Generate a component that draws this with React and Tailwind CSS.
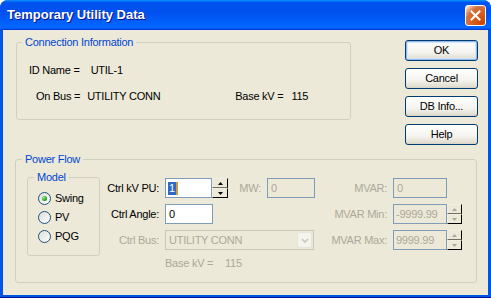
import React from "react";

function Arrow({ up, color }) {
  return (
    <svg width="5" height="3" viewBox="0 0 5 3">
      <polygon points={up ? "2.5,0 5,3 0,3" : "0,0 5,0 2.5,3"} fill={color} />
    </svg>
  );
}

function Spinner({ disabled, w }) {
  const c = disabled ? "#aca899" : "#000";
  return (
    <div className={`flex flex-col h-[20px] ${w}`}>
      <div className="flex-1 flex items-center justify-center bg-[#ece9d8] border border-[#f1efe2] border-r-black border-b-[#716f64]">
        <Arrow up color={c} />
      </div>
      <div className="flex-1 flex items-center justify-center bg-[#ece9d8] border border-[#f1efe2] border-r-black border-b-black">
        <Arrow color={c} />
      </div>
    </div>
  );
}

function Button({ children, def }) {
  return (
    <div
      className={`h-[21px] w-[73px] flex items-center justify-center rounded-[3px] border border-[#003c74] bg-[linear-gradient(180deg,#ffffff,#f4f3ee_60%,#e3e0d3_90%,#d6d0c5)] ${
        def ? "shadow-[inset_0_0_0_1px_#98b8ea,inset_0_0_0_2px_#cee7ff]" : ""
      }`}
    >
      {children}
    </div>
  );
}

function Radio({ checked, label }) {
  return (
    <div className="flex items-center h-[13px] gap-[4px]">
      <div className="w-[13px] h-[13px] rounded-full border border-[#1c5180] bg-[linear-gradient(135deg,#dcdcd7,#ffffff)] flex items-center justify-center">
        {checked && (
          <div className="w-[5px] h-[5px] rounded-full bg-[radial-gradient(circle_at_35%_35%,#a6e88a,#21a121_60%,#1a8a1a)]" />
        )}
      </div>
      <span>{label}</span>
    </div>
  );
}

export default function App() {
  return (
    <div className="w-[491px] h-[298px] flex flex-col rounded-t-[8px] overflow-hidden bg-[#0055e5] font-['Liberation_Sans',Arial,sans-serif] text-[11px] leading-[13px] tracking-[-0.25px] text-black">
      {/* title bar */}
      <div className="h-[30px] shrink-0 flex items-center justify-between pl-[7px] pr-[5px] bg-[linear-gradient(180deg,#0997ff,#0053ee_8%,#0050ee_40%,#0066ff_88%,#0066ff_93%,#005bff_95%,#003dd7_96%,#003dd7)]">
        <span className="text-white font-bold text-[13px] leading-[16px] tracking-normal [text-shadow:1px_1px_#0f1089]">
          Temporary Utility Data
        </span>
        <div className="w-[21px] h-[21px] rounded-[3px] border border-white bg-[radial-gradient(circle_at_90%_90%,#cc4600_0%,#dc6527_55%,#cd7546_70%,#ffccb2_90%,#ffffff_100%)] flex items-center justify-center">
          <svg width="11" height="11" viewBox="0 0 11 11">
            <path d="M1.5 1.5 L9.5 9.5 M9.5 1.5 L1.5 9.5" stroke="white" strokeWidth="2" strokeLinecap="square" />
          </svg>
        </div>
      </div>

      {/* frame body */}
      <div className="flex-1 flex flex-col px-[3px] pb-[2px] border-b border-[#00138c]">
        <div className="flex-1 bg-[#ece9d8] flex flex-col">
          {/* top section */}
          <div className="flex items-start h-[115px]">
            <fieldset className="ml-[13px] mt-[6px] w-[335px] h-[84px] border border-[#d0d0bf] rounded-[3px]">
              <legend className="ml-[5px] px-[3px] text-[#0046d5]">Connection Information</legend>
              <div className="flex mt-[15px] pl-[12px]">
                <span>ID Name =</span>
                <span className="ml-[11px]">UTIL-1</span>
              </div>
              <div className="flex mt-[13px]">
                <span className="ml-[19px]">On Bus =</span>
                <span className="ml-[7px] w-[148px]">UTILITY CONN</span>
                <span>Base kV =</span>
                <span className="ml-[8px]">115</span>
              </div>
            </fieldset>
            <div className="ml-[54px] mt-[10px] flex flex-col gap-[7px]">
              <Button def>OK</Button>
              <Button>Cancel</Button>
              <Button>DB Info...</Button>
              <Button>Help</Button>
            </div>
          </div>

          {/* power flow */}
          <fieldset className="ml-[12px] mt-[8px] w-[462px] h-[130px] border border-[#d0d0bf] rounded-[3px]">
            <legend className="ml-[6px] px-[3px] text-[#0046d5]">Power Flow</legend>
            <div className="flex items-start">
              <fieldset className="ml-[11px] mt-[5px] w-[73px] h-[85px] border border-[#d0d0bf] rounded-[3px]">
                <legend className="ml-[6px] px-[3px] text-[#0046d5]">Model</legend>
                <div className="flex flex-col gap-[6px] mt-[8px] ml-[10px]">
                  <Radio checked label="Swing" />
                  <Radio label="PV" />
                  <Radio label="PQG" />
                </div>
              </fieldset>

              <div className="mt-[12px] grid grid-cols-[65px_63px_39px_48px_78px_69px] grid-rows-[20px_20px_20px_14px] gap-y-[6px] items-center">
                {/* row 1 */}
                <span className="text-right pr-[6px]">Ctrl kV PU:</span>
                <div className="flex h-[20px]">
                  <div className="w-[47px] h-[20px] border border-[#7f9db9] bg-white flex items-center pl-[2px]">
                    <span className="bg-[#316ac5] text-white px-[1px] leading-[13px]">1</span>
                    <span className="w-[2px] h-[13px] bg-[#cf9a3a]" />
                  </div>
                  <Spinner w="w-[16px]" />
                </div>
                <span className="text-right pr-[6px] text-[#aca899]">MW:</span>
                <div className="w-[48px] h-[20px] border border-[#7f9db9] flex items-center pl-[3px] text-[#aca899]">0</div>
                <span className="text-right pr-[6px] text-[#aca899]">MVAR:</span>
                <div className="w-[54px] h-[20px] border border-[#7f9db9] flex items-center pl-[3px] text-[#aca899]">0</div>

                {/* row 2 */}
                <span className="text-right pr-[6px]">Ctrl Angle:</span>
                <div className="w-[48px] h-[20px] border border-[#7f9db9] bg-white flex items-center pl-[3px]">0</div>
                <span />
                <span />
                <span className="text-right pr-[6px] text-[#aca899]">MVAR Min:</span>
                <div className="flex h-[20px]">
                  <div className="w-[54px] h-[20px] border border-[#7f9db9] flex items-center pl-[2px] text-[#aca899]">-9999.99</div>
                  <Spinner disabled w="w-[15px]" />
                </div>

                {/* row 3 */}
                <span className="text-right pr-[6px] text-[#aca899]">Ctrl Bus:</span>
                <div className="col-span-3 w-[149px] h-[20px] border border-[#c9c7ba] flex items-center justify-between pl-[3px] pr-[1px] text-[#aca899]">
                  <span>UTILITY CONN</span>
                  <div className="w-[15px] h-[16px] rounded-[2px] border border-[#e8e6da] bg-[#f4f3ee] flex items-center justify-center">
                    <svg width="8" height="5" viewBox="0 0 8 5">
                      <path d="M1 1 L4 4 L7 1" stroke="#c9c7ba" strokeWidth="1.6" fill="none" />
                    </svg>
                  </div>
                </div>
                <span className="text-right pr-[6px] text-[#aca899]">MVAR Max:</span>
                <div className="flex h-[20px]">
                  <div className="w-[54px] h-[20px] border border-[#7f9db9] flex items-center pl-[2px] text-[#aca899]">9999.99</div>
                  <Spinner disabled w="w-[15px]" />
                </div>

                {/* row 4 */}
                <span />
                <div className="col-span-3 flex text-[#aca899]">
                  <span className="w-[60px]">Base kV =</span>
                  <span>115</span>
                </div>
              </div>
            </div>
          </fieldset>
        </div>
      </div>
    </div>
  );
}
